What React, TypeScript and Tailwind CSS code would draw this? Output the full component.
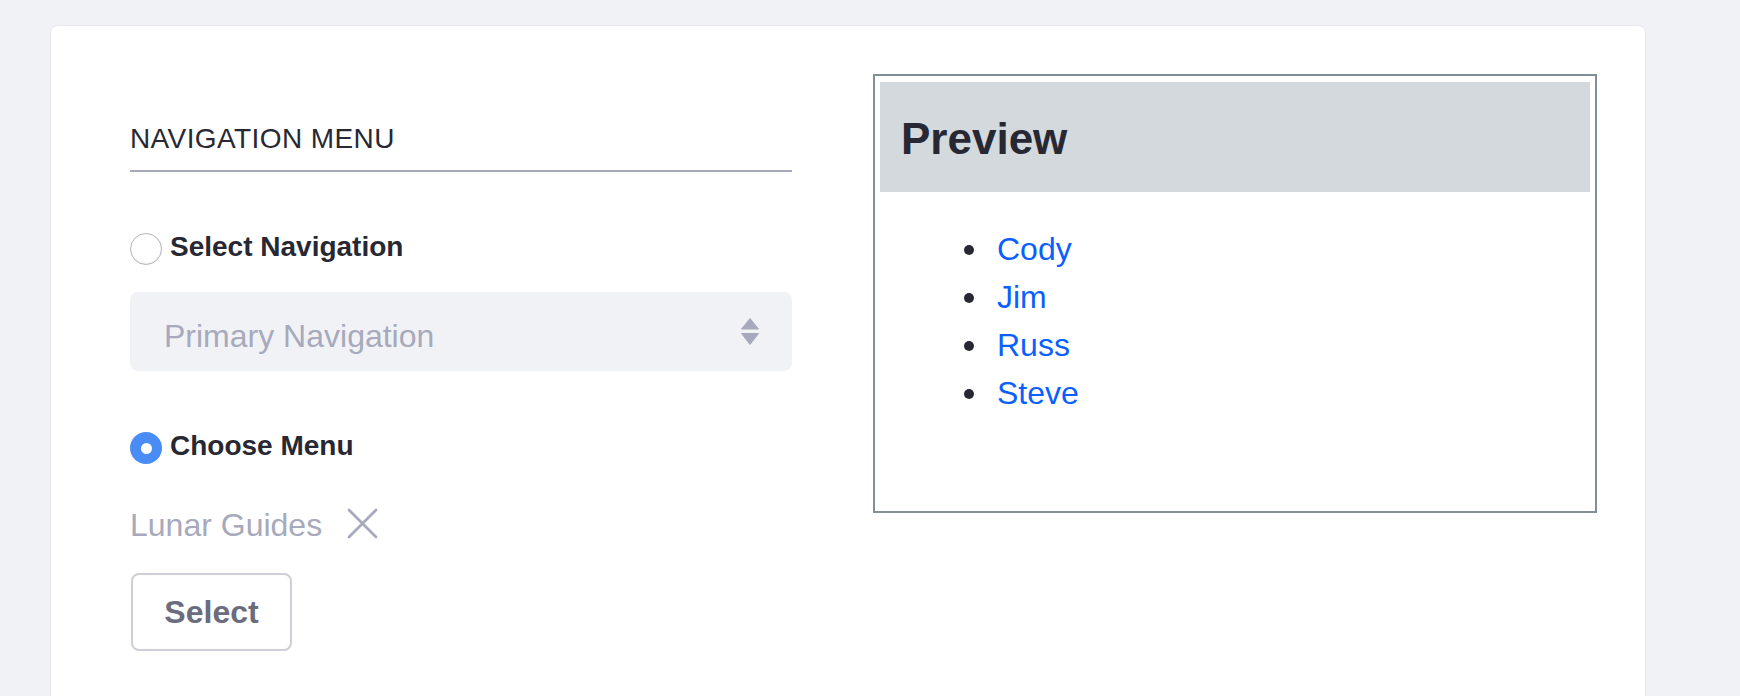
import React from "react";

const font = { fontFamily: '"Liberation Sans", Arial, sans-serif' };

function Radio({ checked }: { checked?: boolean }) {
  if (checked) {
    return (
      <span className="flex h-[32px] w-[32px] shrink-0 items-center justify-center rounded-full bg-[#4a8cf6]">
        <span className="h-[11px] w-[11px] rounded-full bg-white" />
      </span>
    );
  }
  return (
    <span className="block h-[32px] w-[32px] shrink-0 rounded-full border border-[#b4b4ba] bg-white shadow-[inset_0_-1px_2px_rgba(0,0,0,0.08)]" />
  );
}

export default function App() {
  const people = ["Cody", "Jim", "Russ", "Steve"];
  return (
    <div className="h-[696px] w-full overflow-hidden bg-[#f1f2f5] pt-[25px]" style={font}>
      <div className="ml-[50px] flex h-[720px] w-[1596px] rounded-[8px] border border-[#e7e7ed] bg-white pl-[79px]">
        {/* Left column */}
        <div className="flex w-[662px] flex-col items-start">
          <div className="mt-[96px] w-full border-b-2 border-[#a7a9bc] pb-[14px] text-[28px] leading-[34px] tracking-[0.4px] uppercase text-[#272833]">
            Navigation Menu
          </div>

          <label className="mt-[58px] flex items-start gap-[8px]">
            <span className="mt-[3px]">
              <Radio />
            </span>
            <span className="text-[28px] font-bold leading-[34px] text-[#272833]">Select Navigation</span>
          </label>

          <div className="mt-[27px] flex h-[79px] w-full items-center justify-between rounded-[8px] bg-[#f1f2f5] pl-[34px] pr-[33px]">
            <span className="mt-[9px] text-[32px] leading-[48px] text-[#a7a9bc]">Primary Navigation</span>
            <svg width="18" height="27" viewBox="0 0 18 27" className="shrink-0">
              <path d="M9 0.5 L17.5 11 L0.5 11 Z" fill="#a7a9bc" strokeLinejoin="round" stroke="#a7a9bc" strokeWidth="1" />
              <path d="M0.5 15.5 L17.5 15.5 L9 26.5 Z" fill="#a7a9bc" strokeLinejoin="round" stroke="#a7a9bc" strokeWidth="1" />
            </svg>
          </div>

          <label className="mt-[58px] flex items-start gap-[8px]">
            <span className="mt-[3px]">
              <Radio checked />
            </span>
            <span className="text-[28px] font-bold leading-[34px] text-[#272833]">Choose Menu</span>
          </label>

          <div className="mt-[37px] flex items-center gap-[25px]">
            <span className="text-[32px] leading-[48px] text-[#a7a9bc]">Lunar Guides</span>
            <svg width="31" height="31" viewBox="0 0 31 31" className="mb-[4px] shrink-0">
              <path d="M2 2 L29 29 M29 2 L2 29" stroke="#a7a9bc" strokeWidth="2.8" strokeLinecap="round" />
            </svg>
          </div>

          <button className="ml-[1px] mt-[24px] flex h-[78px] w-[161px] items-center justify-center rounded-[8px] border-2 border-[#cdced9] bg-white text-[32px] font-bold leading-[48px] text-[#6b6c7e]">
            Select
          </button>
        </div>

        {/* Right column */}
        <div className="ml-[81px] w-[724px]">
          <div className="mt-[48px] h-[439px] border-2 border-[#838f97] px-[5px] pt-[6px]">
            <div className="flex h-[110px] items-center bg-[#d3d9dc] pl-[21px]">
              <h3 className="mt-[4px] text-[44px] font-bold leading-[1.2] text-[#272833]">Preview</h3>
            </div>
            <ul className="mt-[33px] flex flex-col">
              {people.map((p) => (
                <li key={p} className="flex h-[48px] items-center">
                  <span className="ml-[84px] mt-[2px] h-[10px] w-[10px] rounded-full bg-[#272833]" />
                  <a href="#" className="ml-[23px] text-[32px] leading-[48px] text-[#0b5fff]">
                    {p}
                  </a>
                </li>
              ))}
            </ul>
          </div>
        </div>
      </div>
    </div>
  );
}
